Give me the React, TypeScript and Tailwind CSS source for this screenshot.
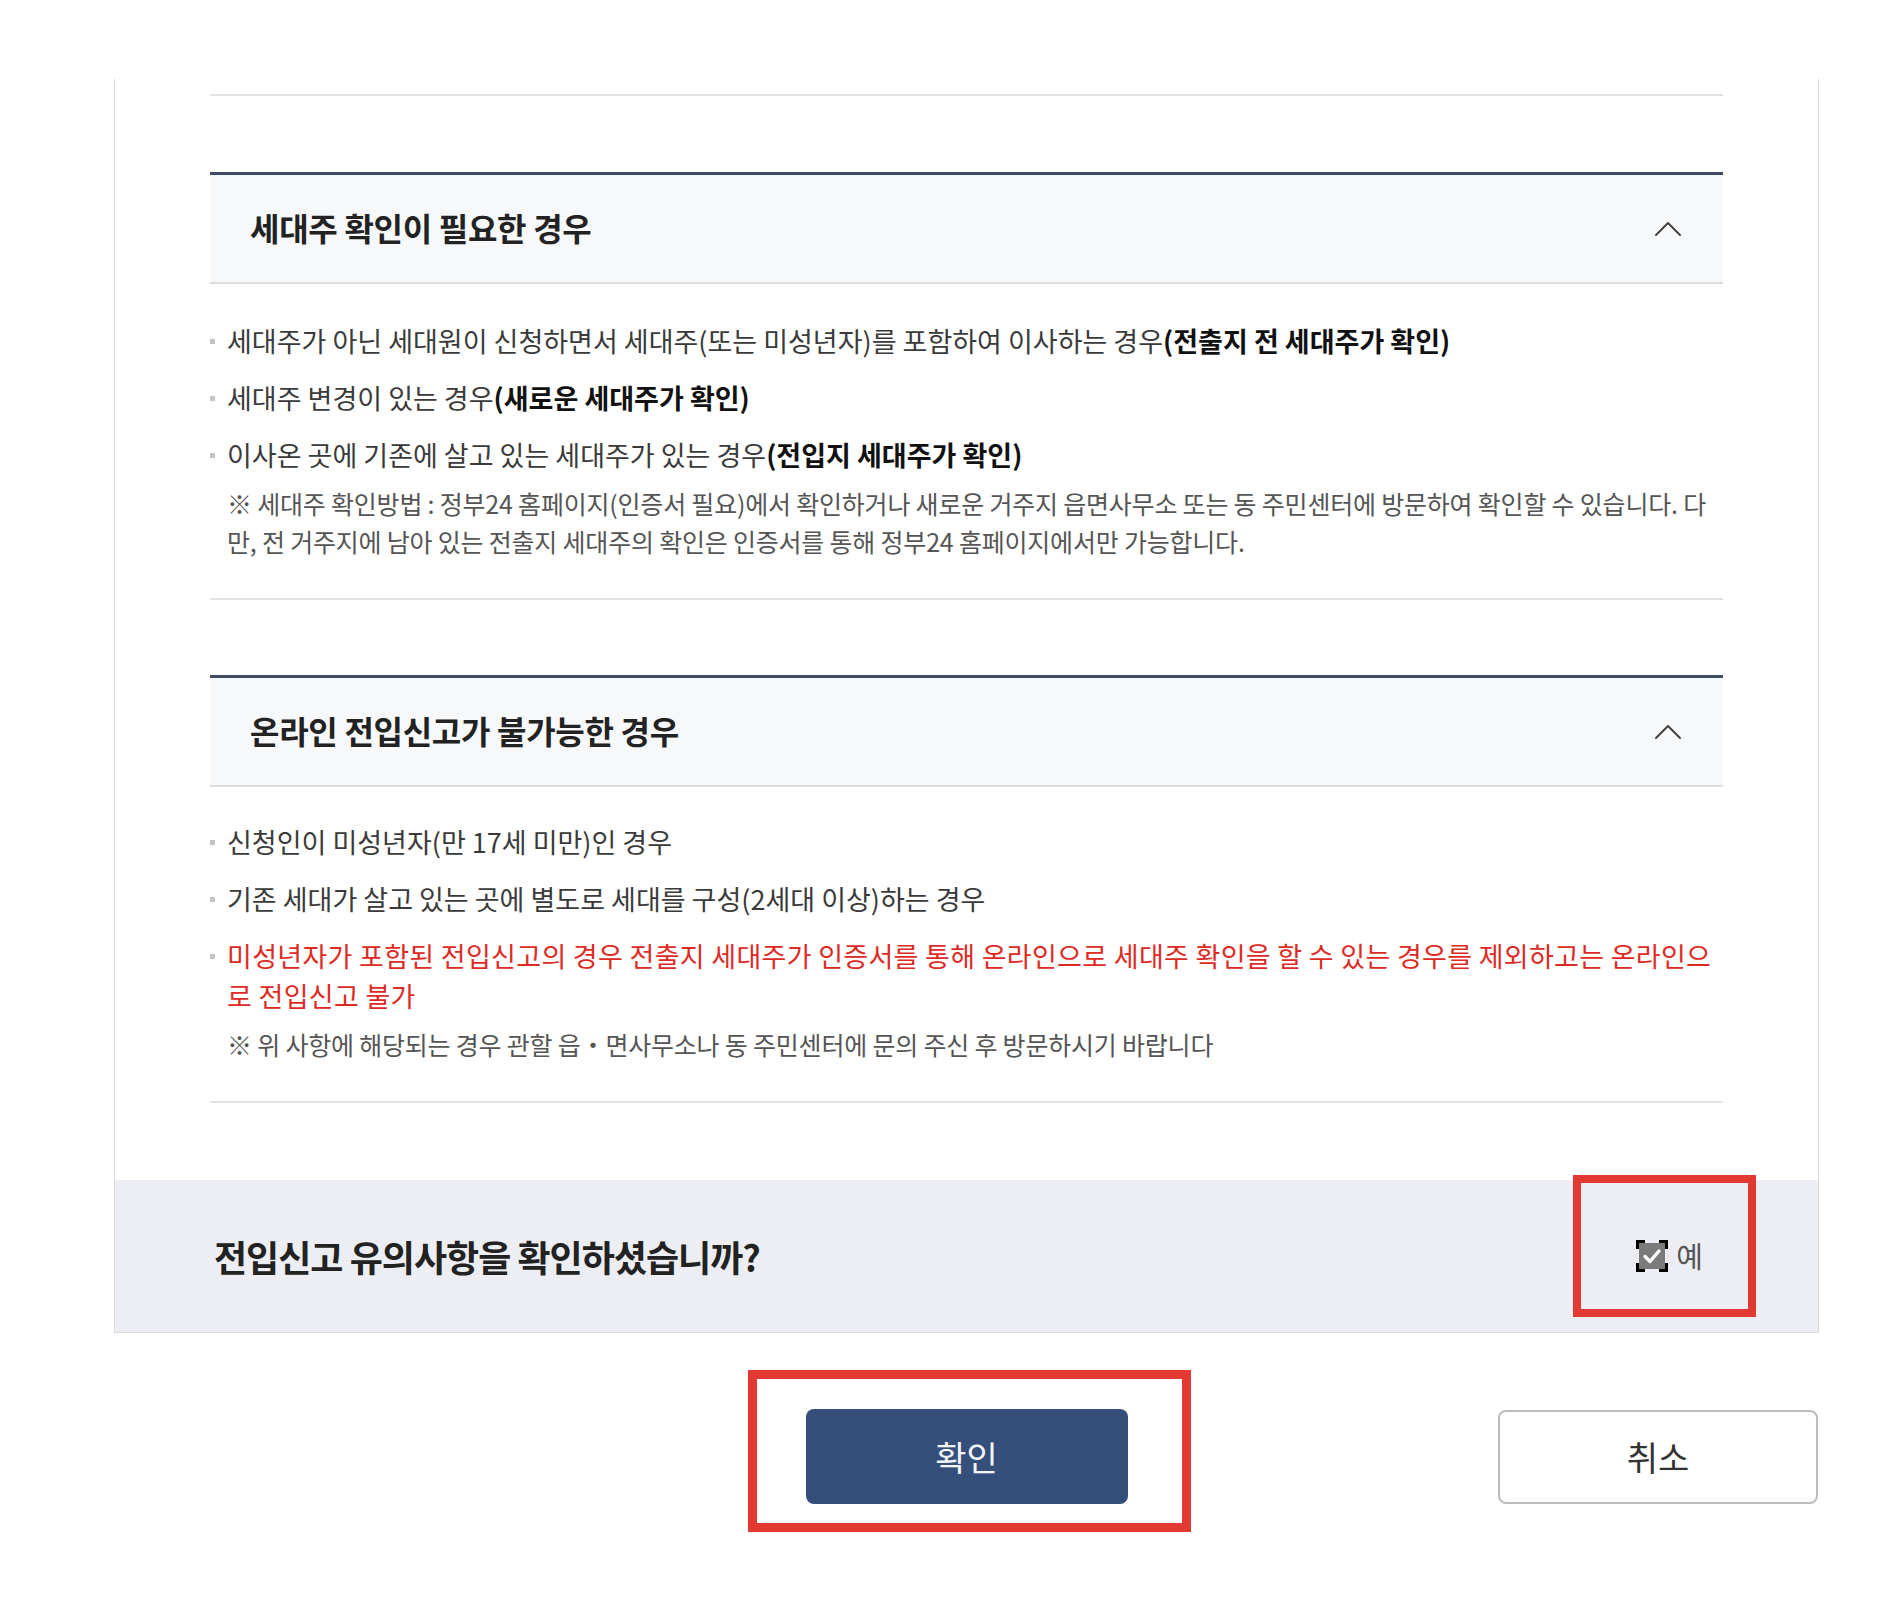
import React from "react";

const FONT = { fontFamily: '"Noto Sans CJK KR", "Noto Sans", sans-serif' };

function Chevron() {
  return (
    <svg width="28" height="18" viewBox="0 0 28 18" fill="none" className="mt-[4px]">
      <polyline points="2,15 14,3 26,15" stroke="#444" strokeWidth="2" strokeLinecap="round" strokeLinejoin="round" />
    </svg>
  );
}

function Bullet({ children, red }: { children: React.ReactNode; red?: boolean }) {
  return (
    <li className={`flex leading-[40px] ${red ? "tracking-[0.3px] text-[#de2a24]" : "text-[#3a3a3a]"}`}>
      <span className="mt-[18px] mr-[12px] h-[5px] w-[5px] shrink-0 bg-[#c4c4c4]" />
      <span className="min-w-0 flex-1">{children}</span>
    </li>
  );
}

function Section({
  title,
  children,
  note,
  first,
}: {
  title: string;
  children: React.ReactNode;
  note: React.ReactNode;
  first?: boolean;
}) {
  return (
    <section className={first ? "mt-[76px]" : "mt-[75px]"}>
      <div className="flex h-[112px] items-center justify-between border-t-[3px] border-b-2 border-t-[#3e4b62] border-b-[#dcdcdc] bg-[#f7f8fa] pb-[3px] pl-[40px] pr-[41px]">
        <h2 className="text-[32px] font-bold tracking-[-0.3px] text-[#222]">{title}</h2>
        <Chevron />
      </div>
      <div className={`border-b-2 border-[#e2e2e2] pb-[38px] ${first ? "pt-[37px]" : "pt-[35px]"}`}>
        <ul className="flex flex-col gap-[17px] text-[27px]">{children}</ul>
        <p className="mt-[9px] pl-[17px] text-[25px] leading-[38px] tracking-[-0.2px] text-[#555]">{note}</p>
      </div>
    </section>
  );
}

function CheckIcon() {
  return (
    <svg width="32" height="32" viewBox="0 0 32 32">
      <rect x="3" y="3" width="26" height="26" fill="#7b7b7b" />
      <path d="M9 16.5 L14 21.5 L23 11" stroke="#fff" strokeWidth="3.4" fill="none" strokeLinecap="round" strokeLinejoin="round" />
      <path d="M1.5 9 V1.5 H9" stroke="#000" strokeWidth="3" fill="none" />
      <path d="M23 1.5 H30.5 V9" stroke="#000" strokeWidth="3" fill="none" />
      <path d="M1.5 23 V30.5 H9" stroke="#000" strokeWidth="3" fill="none" />
      <path d="M23 30.5 H30.5 V23" stroke="#000" strokeWidth="3" fill="none" />
    </svg>
  );
}

export default function App() {
  return (
    <div className="min-h-[1610px] w-[1886px] bg-white" style={FONT}>
      <div className="ml-[114px] mt-[79px] w-[1705px] border-x border-b border-[#d8d8d8] bg-white">
        <div className="px-[95px]">
          <div className="h-[17px] border-b-2 border-[#e2e2e2]" />

          <Section
            first
            title="세대주 확인이 필요한 경우"
            note="※ 세대주 확인방법 : 정부24 홈페이지(인증서 필요)에서 확인하거나 새로운 거주지 읍면사무소 또는 동 주민센터에 방문하여 확인할 수 있습니다. 다만, 전 거주지에 남아 있는 전출지 세대주의 확인은 인증서를 통해 정부24 홈페이지에서만 가능합니다."
          >
            <Bullet>
              세대주가 아닌 세대원이 신청하면서 세대주(또는 미성년자)를 포함하여 이사하는 경우
              <b className="font-bold text-[#111]">(전출지 전 세대주가 확인)</b>
            </Bullet>
            <Bullet>
              세대주 변경이 있는 경우<b className="font-bold text-[#111]">(새로운 세대주가 확인)</b>
            </Bullet>
            <Bullet>
              이사온 곳에 기존에 살고 있는 세대주가 있는 경우<b className="font-bold text-[#111]">(전입지 세대주가 확인)</b>
            </Bullet>
          </Section>

          <Section
            title="온라인 전입신고가 불가능한 경우"
            note="※ 위 사항에 해당되는 경우 관할 읍・면사무소나 동 주민센터에 문의 주신 후 방문하시기 바랍니다"
          >
            <Bullet>신청인이 미성년자(만 17세 미만)인 경우</Bullet>
            <Bullet>기존 세대가 살고 있는 곳에 별도로 세대를 구성(2세대 이상)하는 경우</Bullet>
            <Bullet red>
              미성년자가 포함된 전입신고의 경우 전출지 세대주가 인증서를 통해 온라인으로 세대주 확인을 할 수 있는 경우를 제외하고는 온라인으로 전입신고 불가
            </Bullet>
          </Section>
        </div>

        <div className="relative mt-[77px] flex h-[152px] items-center justify-between bg-[#edeef3] pl-[99px] pr-[115px]">
          <p className="text-[36px] font-bold tracking-[-1px] text-[#222]">전입신고 유의사항을 확인하셨습니까?</p>
          <label className="flex items-center gap-[8px] text-[29px] text-[#555]">
            <CheckIcon />
            <span>예</span>
          </label>
          <div className="pointer-events-none absolute left-[1458px] top-[-5px] h-[142px] w-[183px] border-[8px] border-[#e23a32]" />
        </div>
      </div>

      <div className="ml-[114px] mt-[76px] grid w-[1705px] grid-cols-[1fr_auto_1fr] items-center">
        <div />
        <div className="relative">
          <button className="h-[95px] w-[322px] rounded-[8px] bg-[#354f7a] text-[34px] text-[#f2f4f8]">확인</button>
          <div className="pointer-events-none absolute left-[-58px] top-[-39px] h-[162px] w-[443px] border-[9px] border-[#e23a32]" />
        </div>
        <div className="flex justify-end pr-[1px]">
          <button className="h-[94px] w-[320px] rounded-[8px] border-2 border-[#bdbdbd] bg-white text-[34px] text-[#333]">취소</button>
        </div>
      </div>
    </div>
  );
}
